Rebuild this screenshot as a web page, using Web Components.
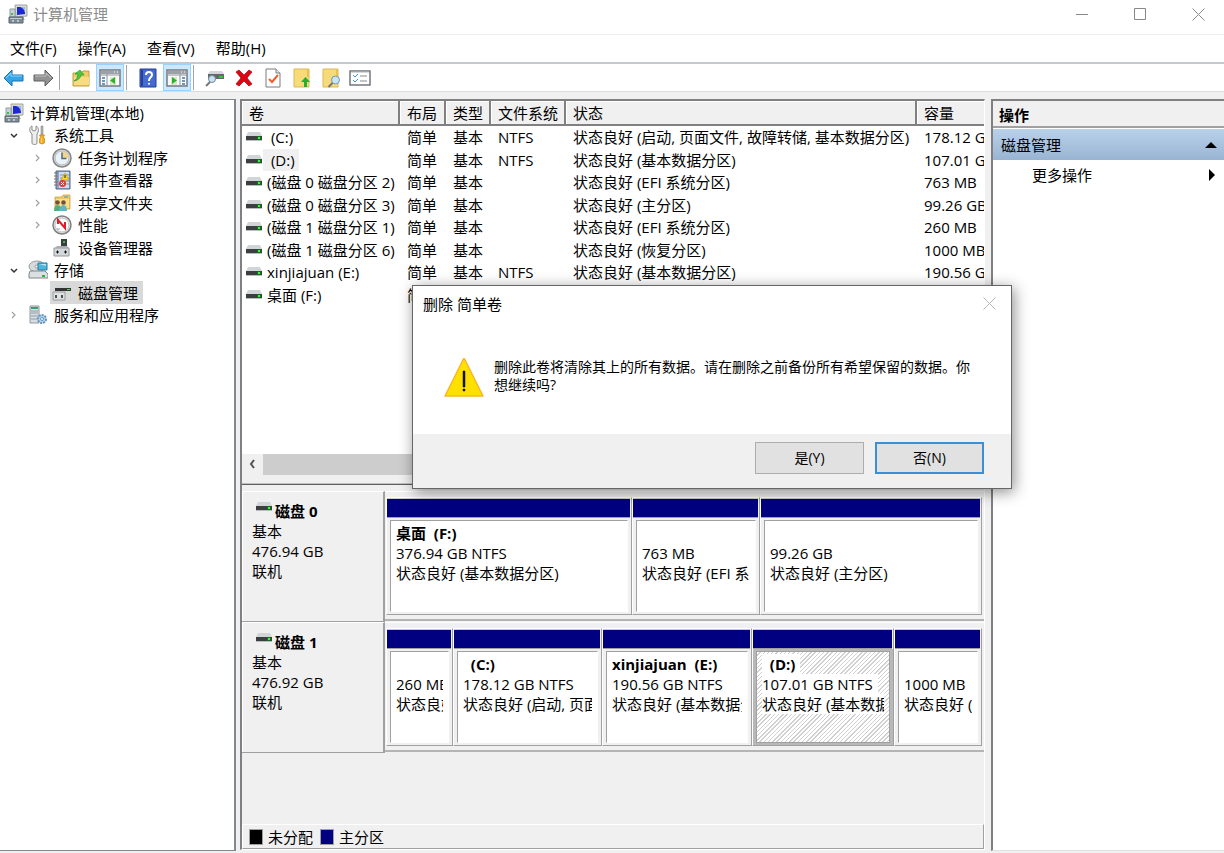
<!DOCTYPE html>
<html lang="zh-CN">
<head>
<meta charset="UTF-8">
<meta name="viewport" content="width=device-width, initial-scale=1">
<title>计算机管理</title>
<style>
  :root {
    --face: #f0f0f0;
    --line: #a0a0a0;
    --dark: #808080;
    --navy: #000080;
  }

  body {
    margin: 0;
    background: var(--face);
    color: #000;
    font: 15px/22px "Open Sans", "Noto Sans CJK SC", sans-serif;
  }
</style>
</head>
<body>

<management-console></management-console>

<script>
// Icons, keyed by name: [width, height, markup]
const ICONS = {
  computer: [20, 20, `
    <path d="M7 1h12v11l-11 1z" fill="#d9dad2" stroke="#a4a69c"/>
    <path d="M9 3h8v7l-8 1z" fill="#1a2ad0"/><path d="M12 3h5v6q-1-5-5-6z" fill="#9db8f6"/>
    <path d="M9 13h6l2 3h-6z" fill="#b8bab4"/>
    <path d="M2 5h5v8H2z" fill="#c9d2d9" stroke="#8f9aa3"/><path d="M3 9h2v2H3z" fill="#39c339"/>
    <path d="M1 13h14v6H1z" fill="#7d8b95" stroke="#59656e"/><path d="M2 14.500h12" stroke="#c4ced4"/>
    <path d="M4 17h2m3 0h2" stroke="#fff"/>`],
  tools: [18, 20, `
    <path d="M3 1v4l2 1 2-1V1c3 1 3 6 1 8v9c0 2-5 2-5 0V9C0 7 0 2 3 1z" fill="#eee" stroke="#8a8a8a"/>
    <path d="M12 1h2v9h-2z" fill="#b4b4b4" stroke="#777" stroke-width=".5"/>
    <path d="M10.500 10h5l-1 2 1 2v4q-2.500 2-5 0v-4l1-2z" fill="#f5ad1b" stroke="#c58309" stroke-width=".7"/>
    <path d="M12.500 13v5" stroke="#ffdb80"/>`],
  clock: [20, 20, `
    <circle cx="10" cy="10" r="9" fill="#dcdcda" stroke="#858585" stroke-width="1.500"/>
    <circle cx="10" cy="10" r="7" fill="#e9f2fa" stroke="#b5b9bb"/>
    <path d="M10 10V3.500a6.500 6.500 0 016.500 6.500z" fill="#f5d489"/>
    <path d="M10 4.500V10.500h4.500" fill="none" stroke="#4b6a87" stroke-width="1.500"/>`],
  events: [18, 20, `
    <path d="M3 1h14v18H3z" fill="#8ba5cb" stroke="#53688b"/>
    <path d="M6 2h10v16H6z" fill="#d3ddec"/><path d="M7 5h9m-9 3h9m-9 3h9m-9 3h9" stroke="#8198bd"/>
    <path d="M1 3h4M1 6h4M1 9h4m-4 3h4m-4 3h4" stroke="#777"/>
    <path d="M12 3l4 7H8z" fill="#ffd62b" stroke="#bb9300" stroke-width=".6"/><path d="M12 5v3" stroke="#222"/>
    <circle cx="9.500" cy="13.500" r="3.500" fill="#dc3b42"/><path d="M8 12l3 3m0-3l-3 3" stroke="#fff"/>`],
  shared: [18, 18, `
    <path d="M2 3h7l1-2h7v14H2z" fill="#efc964" stroke="#c9a248" stroke-width=".8"/>
    <path d="M3 5h13v9H3z" fill="#f8dd8a"/><path d="M11 3h4" stroke="#3a9ad7"/>
    <circle cx="4.500" cy="8.500" r="2.300" fill="#745239"/><circle cx="10.500" cy="8.500" r="2.300" fill="#745239"/>
    <path d="M1 17q0-6 3.500-6t4.500 6z" fill="#4fae7b"/><path d="M6 17q1-6 4.500-6t3.500 6z" fill="#5fb5c4"/>`],
  gauge: [20, 20, `
    <circle cx="10" cy="10" r="9" fill="#e4e4e4" stroke="#808080" stroke-width="1.500"/>
    <circle cx="10" cy="10" r="7" fill="#fff" stroke="#c0c0c0"/>
    <path d="M6 9V5l7 8V7" fill="none" stroke="#e01c2b" stroke-width="2"/><path d="M5 14h3" stroke="#999"/>`],
  device: [18, 20, `
    <path d="M8 1h6v9H8z" fill="#3b3d40"/><path d="M10 3h2v2h-2z" fill="#38c038"/>
    <path d="M1 10h15v8H1z" fill="#d5d8da" stroke="#93989c"/><path d="M2 10l2-2h10l2 2z" fill="#aaaeb1"/>
    <path d="M4 13h1v2H4zm8 0h1v2h-1z" stroke="#111" fill="#111"/>`],
  storage: [20, 20, `
    <ellipse cx="9" cy="6.500" rx="8" ry="5.500" fill="#d7dadb" stroke="#959b9f"/>
    <ellipse cx="9" cy="6.500" rx="2" ry="1.500" fill="#fff" stroke="#999"/>
    <path d="M10 3h9v7h-9z" fill="#4cb6de" stroke="#287ca1"/><path d="M11 4h7v2z" fill="#b5e5f7"/>
    <path d="M2 11h15l3 3v4H1v-4z" fill="#dcdfe1" stroke="#818689"/><path d="M14 15h3v2h-3z" fill="#29b53c"/>`],
  diskmgmt: [20, 18, `
    <path d="M3 4l2-3h14v3z" fill="#d2d5d7"/><path d="M3 4h16v3H3z" fill="#333"/>
    <path d="M15 5h3v1h-3z" fill="#45d640"/><path d="M1 8h12v8H1z" fill="#dfe1e3" stroke="#989c9f"/>
    <path d="M4 11v3m6-3v3" stroke="#222" stroke-width="1.500"/>`],
  services: [20, 20, `
    <path d="M2 1h9v17H2z" fill="#d8dfe4" stroke="#8c989f"/><path d="M3 2h7v2H3z" fill="#3d9e75"/>
    <path d="M3 6h7M3 8h7m-7 3h7m-7 3h7" stroke="#8c9ba5"/>
    <circle cx="14" cy="14" r="4" fill="#b9d5ec" stroke="#6295bd" stroke-width="2" stroke-dasharray="2 1"/>
    <circle cx="14" cy="14" r="1.500" fill="#fff" stroke="#6093bd"/>`],
  volume: [18, 12, `
    <path d="M3 1h12l2 4H1z" fill="#d1d5d8"/><path d="M1 5h16v5H1z" fill="#b8bdc0"/>
    <path d="M1 5h16v4H1z" fill="#3c3e40"/><path d="M12 5h4v4h-4z" fill="#176b1c"/><path d="M13 6h2v2h-2z" fill="#3cf540"/>`],
  back: [22, 20, `<path d="M1 10l8-8v5h11v6H9v5z" fill="#35a5e5" stroke="#1871b2"/><path d="M3 10l5-5v3h11" fill="none" stroke="#8bd5fa"/>`],
  forward: [22, 20, `<path d="M21 10l-8-8v5H2v6h11v5z" fill="#929292" stroke="#5e5e5e"/><path d="M3 8h11V5l5 5" fill="none" stroke="#c0c0c0"/>`],
  upfolder: [20, 20, `
    <path d="M2 5h8l2-2h6v15H2z" fill="#efcb68" stroke="#c39f43"/><path d="M3 9h15v8H3z" fill="#f8dc82"/>
    <path d="M3 13q4-2 4-7H4l5-4 4 5h-3q-1 5-7 6z" fill="#4cc942" stroke="#26942a" stroke-width=".7"/>`],
  paneleft: [22, 18, `
    <path d="M1 1h20v16H1z" fill="#fafafa" stroke="#757a80" stroke-width="1.500"/><path d="M2 2h18v3H2z" fill="#9ba1a7"/>
    <path d="M15 3h1m2 0h1" stroke="#fff"/><path d="M8 5v12m-7-11h20" stroke="#8e949a"/>
    <path d="M3 9h3M3 12h3M3 15h3" stroke="#4278ad" stroke-width="1.500"/><path d="M11 8h6v8h-6z" fill="#d8e6cb"/>
    <path d="M16 8v7l-5-3.500z" fill="#2faf2c"/>`],
  paneright: [22, 18, `
    <path d="M1 1h20v16H1z" fill="#fafafa" stroke="#757a80" stroke-width="1.500"/><path d="M2 2h18v3H2z" fill="#9ba1a7"/>
    <path d="M15 3h1m2 0h1" stroke="#fff"/><path d="M14 5v12M1 6h20" stroke="#8e949a"/>
    <path d="M16 9h3m-3 3h3m-3 3h3" stroke="#4278ad" stroke-width="1.500"/><path d="M5 8h6v8H5z" fill="#d8e6cb"/>
    <path d="M6 8v7l5-3.500z" fill="#2faf2c"/>`],
  help: [18, 20, `
    <path d="M1 1h16v18H1z" fill="#456bd2" stroke="#253f92"/><path d="M2 2h2v16H2z" fill="#263f99"/>
    <path d="M7 7q0-3 3-3t3 3q0 1-2 3-1 1-1 3m0 2v1.500" fill="none" stroke="#fff" stroke-width="2"/>`],
  inspect: [20, 18, `
    <path d="M3 5l2-3h12l2 3z" fill="#d4d7d9"/><path d="M3 5h16v5H3z" fill="#63686b"/><path d="M14 7h4v2h-4z" fill="#2ecb31"/>
    <circle cx="7" cy="10" r="3.500" fill="#c8e2f2" stroke="#73889a"/><path d="M5 13l-4 4" stroke="#777" stroke-width="2"/>`],
  remove: [20, 20, `<path d="M2 4l3-2 5 5 5-5 3 2-5 6 5 6-3 2-5-5-5 5-3-2 5-6z" fill="#dc0714" stroke="#a50009" stroke-width=".7"/>`],
  check: [18, 20, `
    <path d="M2 1h10l4 4v14H2z" fill="#fff" stroke="#7a7a7a"/><path d="M12 1v4h4" fill="#eee" stroke="#7a7a7a"/>
    <path d="M5 11l3 3 6-7" fill="none" stroke="#f15b2a" stroke-width="2"/>`],
  foldernew: [18, 20, `
    <path d="M1 1h15v18H1z" fill="#f8db79" stroke="#d9b95a"/><path d="M14 1h2v8h-2z" fill="#e9c14e"/>
    <path d="M12.500 9l4.500 5h-3v5h-3v-5H8z" fill="#29ae33"/>`],
  foldersearch: [20, 20, `
    <path d="M2 1h15v18H2z" fill="#f8db79" stroke="#d9b95a"/><path d="M15 1h2v8h-2z" fill="#e9c14e"/>
    <circle cx="14.500" cy="12" r="4" fill="#c6e5f5" stroke="#7398b5"/><path d="M11.500 15l-4 4" stroke="#777" stroke-width="2"/>`],
  checklist: [22, 18, `
    <path d="M1 2h20v14H1z" fill="#fff" stroke="#73787d" stroke-width="1.500"/><path d="M2 3h18" stroke="#aeb3b7"/>
    <path d="M4 6l2 2 3-3M4 11l2 2 3-3" fill="none" stroke="#3697dd"/><path d="M11 7h7m-7 5h7" stroke="#888"/>`],
  minimize: [12, 12, `<path d="M0 6.500h12" stroke="#888"/>`],
  maximize: [12, 12, `<path d="M.5.5h11v11H.5z" fill="none" stroke="#888"/>`],
  close: [13, 13, `<path d="M.5.5l12 12M12.500.5l-12 12" stroke="currentColor"/>`],
  expanded: [10, 10, `<path d="M2 4l3 3 3-3" fill="none" stroke="#333" stroke-width="1.500"/>`],
  collapsed: [10, 10, `<path d="M3 2l3 3-3 3" fill="none" stroke="#a0a0a0" stroke-width="1.200"/>`],
  scrollleft: [10, 10, `<path d="M6 1L3 5l3 4" fill="none" stroke="#505050" stroke-width="2"/>`],
  up: [12, 6, `<path d="M0 6l6-6 6 6z"/>`],
  right: [6, 12, `<path d="M0 0l6 6-6 6z"/>`],
  warning: [42, 42, `
    <path d="M21 0L2 38h38z" fill="#ffe000" stroke="#f7b824" stroke-width="1.500" stroke-linejoin="round"/>
    <path d="M20 13h2v16h-2zm0 18h2v2h-2z" fill="#111" stroke="#111" stroke-width=".5"/>`],
};

// Base class: puts styles and markup in an open shadow root
class ConsoleElement extends HTMLElement {
  connectedCallback() {
    if (this.shadowRoot) return;
    this.attachShadow({ mode: "open" });
    this.shadowRoot.innerHTML = `
      <style>
        * { box-sizing: border-box; }
        button { font: inherit; color: inherit; border: 0; padding: 0; background: none; }
        ${this.styles()}
      </style>
      ${this.markup()}`;
  }
}

class MmcIcon extends ConsoleElement {
  styles() {
    return `:host { display: inline-block; flex: none; white-space: normal; } svg { display: block; }`;
  }
  markup() {
    const [w, h, body] = ICONS[this.getAttribute("name")];
    return `<svg width="${w}" height="${h}" viewBox="0 0 ${w} ${h}" aria-hidden="true">${body}</svg>`;
  }
}

class TitleBar extends ConsoleElement {
  styles() {
    return `
      :host { display: flex; align-items: center; height: 35px; padding: 0 0 6px 8px; background: #fff; color: #8c8c8c; border-bottom: 1px solid #ececec; box-sizing: border-box; }
      .title { flex: 1; margin-left: 5px; }
      .buttons { display: flex; gap: 6px; }
      button { width: 52px; height: 28px; display: grid; place-items: center; }`;
  }
  markup() {
    return `
      <mmc-icon name="computer"></mmc-icon>
      <span class="title"><slot></slot></span>
      <div class="buttons">
        <button aria-label="最小化"><mmc-icon name="minimize"></mmc-icon></button>
        <button aria-label="最大化"><mmc-icon name="maximize"></mmc-icon></button>
        <button aria-label="关闭"><mmc-icon name="close"></mmc-icon></button>
      </div>`;
  }
}

class MenuBar extends ConsoleElement {
  styles() {
    return `
      :host { display: flex; gap: 21px; height: 29px; padding-left: 10px; background: #fff; border-bottom: 2px solid #c5c9ce; box-sizing: border-box; }
      button { height: 25px; }`;
  }
  markup() {
    return ["文件(F)", "操作(A)", "查看(V)", "帮助(H)"].map(m => `<button>${m}</button>`).join("");
  }
}

class ToolBar extends ConsoleElement {
  styles() {
    return `
      :host { display: flex; align-items: center; gap: 1px; height: 28px; background: #fff; border-bottom: 1px solid #dcdcdc; box-sizing: border-box; }
      button { width: 28px; height: 27px; display: grid; place-items: center; }
      button.on { background: #cce8ff; border: 1px solid #99d1ff; }
      i { width: 1px; height: 25px; margin: 0 6px 0 1px; background: #a5a5a5; }`;
  }
  markup() {
    const tools = [
      ["back", "后退"], ["forward", "前进"], null,
      ["upfolder", "向上一级"], ["paneleft", "显示/隐藏控制台树", "on"], null,
      ["help", "帮助"], ["paneright", "显示/隐藏操作窗格", "on"], null,
      ["inspect", "重新扫描磁盘"], ["remove", "删除"], ["check", "属性"],
      ["foldernew", "打开"], ["foldersearch", "浏览"], ["checklist", "设置"],
    ];
    return tools.map(t => t
      ? `<button class="${t[2] ?? ""}" aria-label="${t[1]}"><mmc-icon name="${t[0]}"></mmc-icon></button>`
      : `<i></i>`).join("");
  }
}

class ConsoleTree extends ConsoleElement {
  styles() {
    return `
      :host { display: block; background: #fff; border: 1px solid #828790; border-left: 0; border-right-width: 2px; padding-top: 1px; overflow: hidden; box-sizing: border-box; }
      .node { display: flex; align-items: center; height: 22px; white-space: nowrap; }
      .node:nth-child(even) { height: 23px; }
      .level0 { padding-left: 4px; }
      .level1 { padding-left: 9px; }
      .level2 { padding-left: 33px; }
      .toggle { width: 10px; height: 10px; margin-right: 7px; display: grid; place-items: center; flex: none; }
      .item { display: flex; align-items: center; height: 100%; padding-right: 5px; }
      .item > span { width: 24px; display: grid; place-items: center; margin-right: 4px; }
      .level0 .item > span { width: 20px; margin-right: 6px; }
      .selected .item { background: #d9d9d9; }`;
  }
  markup() {
    const nodes = [
      [0, "computer", "计算机管理(本地)"],
      [1, "tools", "系统工具", "expanded"],
      [2, "clock", "任务计划程序", "collapsed"],
      [2, "events", "事件查看器", "collapsed"],
      [2, "shared", "共享文件夹", "collapsed"],
      [2, "gauge", "性能", "collapsed"],
      [2, "device", "设备管理器"],
      [1, "storage", "存储", "expanded"],
      [2, "diskmgmt", "磁盘管理", "", "selected"],
      [1, "services", "服务和应用程序", "collapsed"],
    ];
    return nodes.map(([level, icon, text, toggle, state]) => `
      <div class="node level${level} ${state ?? ""}">
        ${level ? `<span class="toggle">${toggle ? `<mmc-icon name="${toggle}"></mmc-icon>` : ""}</span>` : ""}
        <span class="item"><span><mmc-icon name="${icon}"></mmc-icon></span>${text}</span>
      </div>`).join("");
  }
}

class VolumeList extends ConsoleElement {
  styles() {
    return `
      :host { display: flex; flex-direction: column; background: #fff; min-height: 0; overflow: hidden; }
      .rows { flex: 1; min-height: 0; overflow: hidden; }
      table { width: 100%; table-layout: fixed; border-collapse: separate; border-spacing: 0; }
      th, td { padding: 0 0 0 7px; text-align: left; font-weight: normal; white-space: pre; overflow: hidden; line-height: 22px; }
      th { height: 25px; background: var(--face); border-right: 2px solid var(--dark); border-bottom: 2px solid var(--dark); box-shadow: inset 1px 1px #fff; }
      th:last-child { border-right: 0; }
      td { height: 22px; }
      tr:nth-child(even) td { height: 23px; }
      td:first-child { padding-left: 3px; }
      .name { display: flex; align-items: center; }
      .name span { padding: 0 4px; }
      .current span { background: #f0f0f0; }
      .scroll { height: 21px; display: flex; background: var(--face); }
      .scroll button { width: 21px; display: grid; place-items: center; }
      .thumb { flex: 1; margin-right: 60px; background: #cdcdcd; }`;
  }
  markup() {
    const volumes = [
      [" (C:)", "NTFS", "状态良好 (启动, 页面文件, 故障转储, 基本数据分区)", "178.12 GB"],
      [" (D:)", "NTFS", "状态良好 (基本数据分区)", "107.01 GB", "current"],
      ["(磁盘 0 磁盘分区 2)", "", "状态良好 (EFI 系统分区)", "763 MB"],
      ["(磁盘 0 磁盘分区 3)", "", "状态良好 (主分区)", "99.26 GB"],
      ["(磁盘 1 磁盘分区 1)", "", "状态良好 (EFI 系统分区)", "260 MB"],
      ["(磁盘 1 磁盘分区 6)", "", "状态良好 (恢复分区)", "1000 MB"],
      ["xinjiajuan (E:)", "NTFS", "状态良好 (基本数据分区)", "190.56 GB"],
      ["桌面 (F:)", "NTFS", "状态良好 (基本数据分区)", "376.94 GB"],
    ];
    return `
      <div class="rows"><table>
        <colgroup><col style="width:158px"><col style="width:46px"><col style="width:45px"><col style="width:75px"><col style="width:351px"><col></colgroup>
        <thead><tr>${["卷", "布局", "类型", "文件系统", "状态", "容量"].map(h => `<th scope="col">${h}</th>`).join("")}</tr></thead>
        <tbody>${volumes.map(([name, fs, status, size, cls]) => `
          <tr class="${cls ?? ""}"><td><div class="name"><mmc-icon name="volume"></mmc-icon><span>${name}</span></div></td><td>简单</td><td>基本</td><td>${fs}</td><td>${status}</td><td>${size}</td></tr>`).join("")}
        </tbody>
      </table></div>
      <div class="scroll"><button aria-label="向左滚动"><mmc-icon name="scrollleft"></mmc-icon></button><div class="thumb"></div></div>`;
  }
}

// One partition: the default slot holds its text lines
class DiskPartition extends ConsoleElement {
  styles() {
    return `
      :host { display: flex; flex-direction: column; min-width: 0; border: 1px solid #fff; border-right-color: var(--line); border-bottom-color: var(--line); box-sizing: border-box; }
      .bar { height: 20px; margin-right: 1px; background: var(--navy); border: 1px solid #c8c8c8; border-width: 1px 0; border-bottom-color: var(--line); }
      .frame { flex: 1; padding: 2px 3px; min-height: 0; }
      .box { height: 100%; background: #fff; border: 1px solid #fff; border-top-color: var(--line); border-left-color: var(--line); padding: 2px 5px 0 5px; overflow: hidden; }
      .text { overflow: hidden; white-space: pre; line-height: 20px; }
      :host([selected]) .frame { background: #b8b8b8; }
      :host([selected]) .box { border-color: var(--line); background: repeating-linear-gradient(135deg, #fff 0 2px, #d0d0d0 2px 3px); }
      ::slotted(div) { height: 20px; }
      ::slotted(.name) { font-weight: bold; }
      :host([selected]) ::slotted(div) { background: #fff; width: fit-content; padding-right: 5px; }`;
  }
  markup() {
    return `<div class="bar"></div><div class="frame"><div class="box"><div class="text"><slot></slot></div></div></div>`;
  }
}

class DiskRow extends ConsoleElement {
  styles() {
    return `
      :host { display: flex; height: 131px; }
      .label { width: 143px; padding: 9px 10px; line-height: 20px; border-top: 1px solid #fff; border-right: 2px solid var(--line); border-bottom: 1px solid var(--line); box-shadow: inset 1px 0 #fff; }
      .label div { height: 20px; }
      .head { display: flex; padding-left: 3px; font-weight: bold; gap: 2px; }
      .graph { flex: 1; min-width: 0; display: grid; grid-template-columns: var(--parts); border-top: 1px solid #fff; border-bottom: 2px solid #b4b4b4; padding: 5px 2px 4px 1px; margin-bottom: 1px; }`;
  }
  markup() {
    return `
      <div class="label">
        <div class="head"><mmc-icon name="volume"></mmc-icon>${this.getAttribute("name")}</div>
        <div>基本</div><div>${this.getAttribute("size")}</div><div>联机</div>
      </div>
      <div class="graph"><slot></slot></div>`;
  }
}

class DiskView extends ConsoleElement {
  styles() {
    return `
      :host { display: flex; flex-direction: column; min-height: 0; padding-top: 6px; overflow: hidden; box-sizing: border-box; }
      .space { flex: 1; }
      .legend { display: flex; align-items: center; height: 25px; padding-left: 6px; border: 1px solid var(--line); border-top-color: #fff; border-left-color: #fff; }
      .swatch { width: 14px; height: 16px; margin-right: 5px; border: 1px solid var(--line); background: #000; }
      .legend span { margin-right: 7px; }
      .primary { background: var(--navy); }`;
  }
  // name may be blank, the line still takes its height
  parts(list) {
    return list.map(([name, size, status, selected]) => `
      <disk-partition ${selected ?? ""}>${[["name", name], ["size", size], ["status", status]]
        .map(([cls, text]) => `<div class="${cls}">${text}</div>`).join("")}</disk-partition>`).join("");
  }
  markup() {
    return `
      <disk-row name="磁盘 0" size="476.94 GB" style="--parts: minmax(0, 246fr) minmax(0, 128fr) minmax(0, 222fr)">${this.parts([
        ["桌面  (F:)", "376.94 GB NTFS", "状态良好 (基本数据分区)"],
        ["", "763 MB", "状态良好 (EFI 系统分区)"],
        ["", "99.26 GB", "状态良好 (主分区)"],
      ])}</disk-row>
      <disk-row name="磁盘 1" size="476.92 GB" style="--parts: minmax(0, 67fr) minmax(0, 149fr) minmax(0, 150fr) minmax(0, 142fr) minmax(0, 88fr)">${this.parts([
        ["", "260 MB", "状态良好 (EFI 系统分区)"],
        ["  (C:)", "178.12 GB NTFS", "状态良好 (启动, 页面文件, 故障转储, 基本数据分区)"],
        ["xinjiajuan  (E:)", "190.56 GB NTFS", "状态良好 (基本数据分区)"],
        ["  (D:)", "107.01 GB NTFS", "状态良好 (基本数据分区)", "selected"],
        ["", "1000 MB", "状态良好 (恢复分区)"],
      ])}</disk-row>
      <div class="space"></div>
      <div class="legend">
        <div class="swatch"></div><span>未分配</span>
        <div class="swatch primary"></div><span>主分区</span>
      </div>`;
  }
}

class ActionsPane extends ConsoleElement {
  styles() {
    return `
      :host { display: block; background: #fff; border: 2px solid var(--dark); border-right: 0; border-bottom: 1px solid #e0e0e0; overflow: hidden; box-sizing: border-box; }
      h2 { margin: 0; height: 27px; padding: 3px 6px 0; font-size: 15px; line-height: 22px; background: var(--face); border-bottom: 2px solid var(--line); }
      button { display: flex; width: 100%; align-items: center; justify-content: space-between; }
      .group { height: 31px; margin-top: 1px; padding: 0 7px 0 8px; background: linear-gradient(#b9d1ea, #99b4d3); }
      .more { height: 29px; padding: 0 9px 0 39px; }`;
  }
  markup() {
    return `
      <h2>操作</h2>
      <button class="group">磁盘管理<mmc-icon name="up"></mmc-icon></button>
      <button class="more">更多操作<mmc-icon name="right"></mmc-icon></button>`;
  }
}

// Message box: slots "title" and default text
class ConfirmDialog extends ConsoleElement {
  styles() {
    return `
      :host { position: absolute; left: 412px; top: 285px; width: 600px; background: #fff; border: 1px solid #666; box-shadow: 2px 3px 14px rgba(0, 0, 0, .45); font-size: 14px; line-height: 18px; box-sizing: border-box; }
      header { display: flex; align-items: center; justify-content: space-between; height: 36px; padding: 0 15px 0 10px; font-size: 15px; }
      header button { color: #b5b5b5; }
      .body { display: flex; gap: 9px; height: 112px; padding: 36px 32px 0 30px; }
      .body p { margin: 0; width: 480px; }
      footer { display: flex; justify-content: flex-end; gap: 11px; height: 54px; padding: 8px 27px 0; background: var(--face); }
      footer button { width: 109px; height: 32px; background: #e1e1e1; border: 1px solid #adadad; }
      footer button.default { border: 2px solid #3c8fd5; }`;
  }
  markup() {
    return `
      <header><slot name="title"></slot><button aria-label="关闭"><mmc-icon name="close"></mmc-icon></button></header>
      <div class="body"><mmc-icon name="warning"></mmc-icon><p><slot></slot></p></div>
      <footer><button>是(Y)</button><button class="default">否(N)</button></footer>`;
  }
}

class ManagementConsole extends ConsoleElement {
  styles() {
    return `
      :host { display: flex; flex-direction: column; height: 100vh; overflow: hidden; }
      main { flex: 1; min-height: 0; display: grid; grid-template-columns: 236px minmax(0, 1fr) 233px; grid-template-rows: minmax(0, 1fr); padding: 7px 0 2px; }
      .center { display: grid; grid-template-rows: minmax(0, 373fr) 10px minmax(0, 364fr); margin: 0 6px 1px 4px; border: 2px solid var(--dark); border-right: 1px solid #fff; border-bottom: 1px solid #fff; }
      .splitter { background: var(--face); border-bottom: 1px solid #606060; box-shadow: inset 0 -1px #c0c0c0; }`;
  }
  markup() {
    return `
      <title-bar>计算机管理</title-bar>
      <menu-bar></menu-bar>
      <tool-bar></tool-bar>
      <main>
        <console-tree></console-tree>
        <div class="center">
          <volume-list></volume-list>
          <div class="splitter"></div>
          <disk-view></disk-view>
        </div>
        <actions-pane></actions-pane>
      </main>
      <confirm-dialog role="dialog" aria-modal="true">
        <span slot="title">删除 简单卷</span>
        删除此卷将清除其上的所有数据。请在删除之前备份所有希望保留的数据。你想继续吗?
      </confirm-dialog>`;
  }
}

customElements.define("mmc-icon", MmcIcon);
customElements.define("title-bar", TitleBar);
customElements.define("menu-bar", MenuBar);
customElements.define("tool-bar", ToolBar);
customElements.define("console-tree", ConsoleTree);
customElements.define("volume-list", VolumeList);
customElements.define("disk-partition", DiskPartition);
customElements.define("disk-row", DiskRow);
customElements.define("disk-view", DiskView);
customElements.define("actions-pane", ActionsPane);
customElements.define("confirm-dialog", ConfirmDialog);
customElements.define("management-console", ManagementConsole);
</script>
</body>
</html>
